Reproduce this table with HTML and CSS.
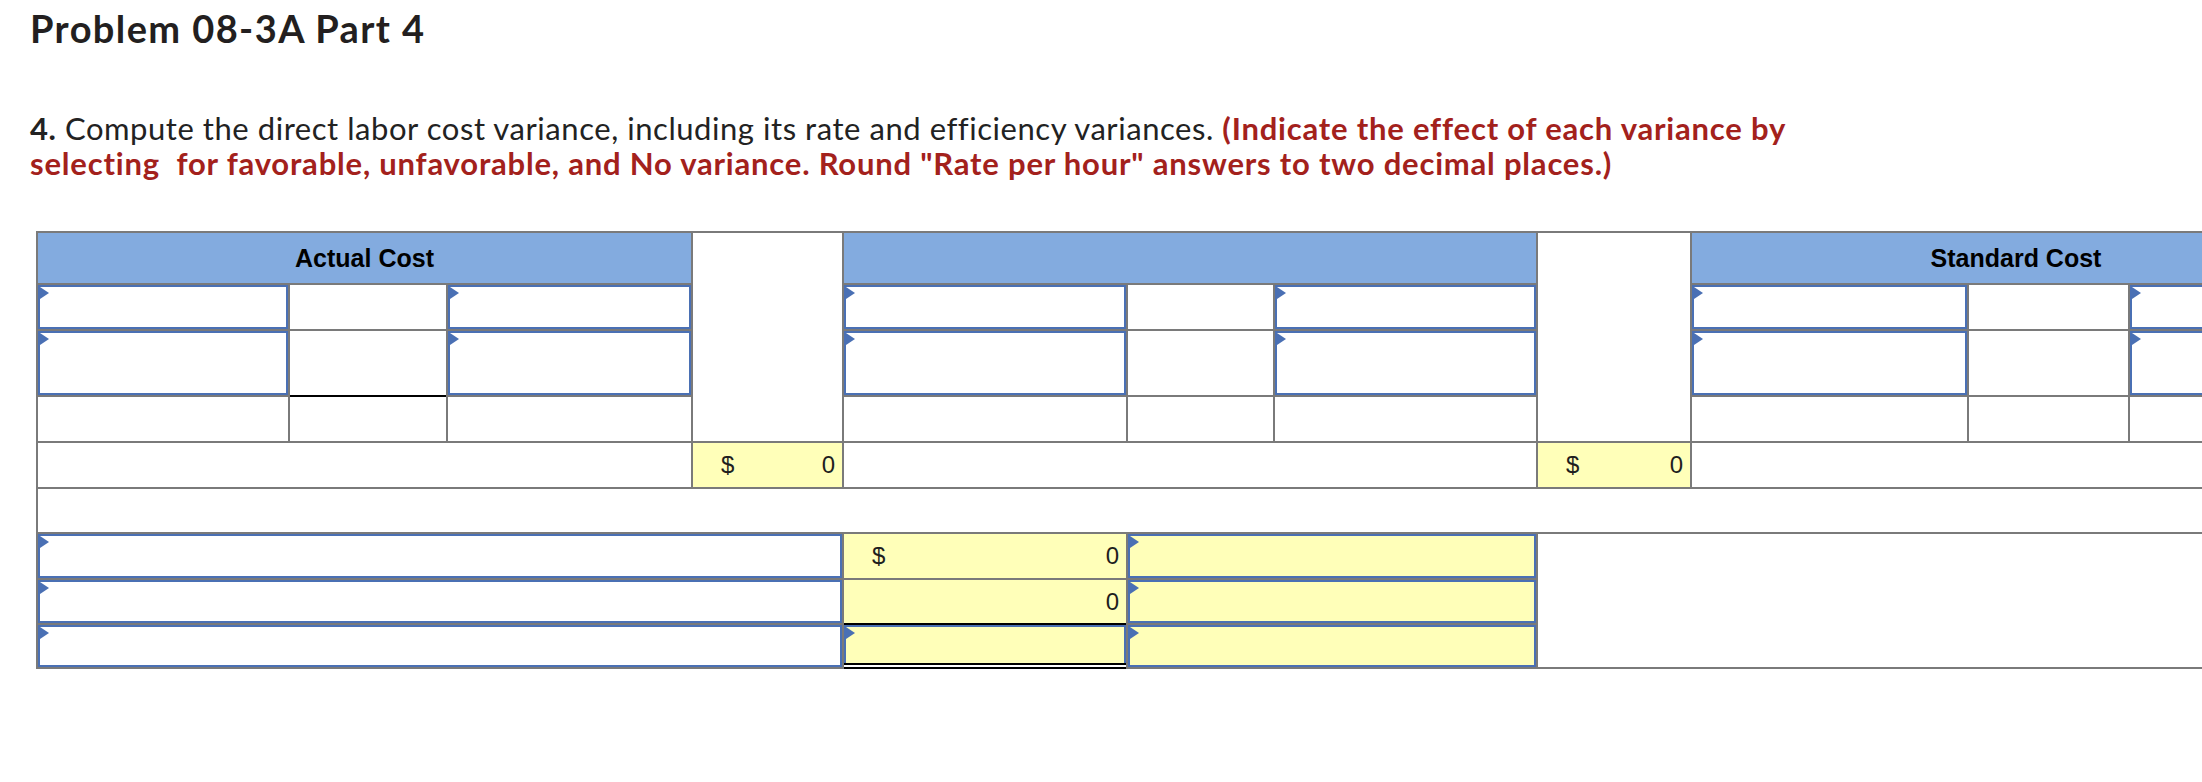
FILE: index.html
```html
<!DOCTYPE html>
<html lang="en">
<head>
<meta charset="utf-8">
<title>Problem 08-3A Part 4</title>
<link rel="stylesheet" href="styles.css">
</head>
<body>
<div class="page">
  <h1 class="title">Problem 08-3A Part 4</h1>
  <p class="prompt"><b class="num">4.</b> Compute the direct labor cost variance, including its rate and efficiency variances. <strong class="note">(Indicate the effect of each variance by selecting&nbsp; for favorable, unfavorable, and No variance. Round "Rate per hour" answers to two decimal places.)</strong></p>

  <div class="sheet-wrap">
    <div class="sheet">
      <!-- header row -->
      <div class="cell hdr span3">Actual Cost</div>
      <div class="cell plain rows4"></div>
      <div class="cell hdr span3"></div>
      <div class="cell plain rows4"></div>
      <div class="cell hdr span3">Standard Cost</div>

      <!-- row 1 -->
      <div class="cell inp"></div>
      <div class="cell plain"></div>
      <div class="cell inp"></div>
      <div class="cell inp"></div>
      <div class="cell plain"></div>
      <div class="cell inp"></div>
      <div class="cell inp"></div>
      <div class="cell plain"></div>
      <div class="cell inp"></div>

      <!-- row 2 -->
      <div class="cell inp"></div>
      <div class="cell plain"></div>
      <div class="cell inp"></div>
      <div class="cell inp"></div>
      <div class="cell plain"></div>
      <div class="cell inp"></div>
      <div class="cell inp"></div>
      <div class="cell plain"></div>
      <div class="cell inp"></div>

      <!-- row 3 -->
      <div class="cell plain"></div>
      <div class="cell plain total-top"></div>
      <div class="cell plain"></div>
      <div class="cell plain"></div>
      <div class="cell plain"></div>
      <div class="cell plain"></div>
      <div class="cell plain"></div>
      <div class="cell plain"></div>
      <div class="cell plain"></div>

      <!-- row 4 -->
      <div class="cell plain span3"></div>
      <div class="cell money"><span>$</span><span>0</span></div>
      <div class="cell plain span3"></div>
      <div class="cell money"><span>$</span><span>0</span></div>
      <div class="cell plain span3"></div>

      <!-- row 5 -->
      <div class="cell plain full"></div>

      <!-- row 6 -->
      <div class="cell inp span4"></div>
      <div class="cell money"><span>$</span><span>0</span></div>
      <div class="cell inp yellow span2"></div>
      <div class="cell plain span4 rows3"></div>

      <!-- row 7 -->
      <div class="cell inp span4"></div>
      <div class="cell money right"><span>0</span></div>
      <div class="cell inp yellow span2"></div>

      <!-- row 8 -->
      <div class="cell inp span4"></div>
      <div class="cell inp yellow grand"></div>
      <div class="cell inp yellow span2"></div>
    </div>
  </div>
</div>
</body>
</html>
```
FILE: styles.css
```css
html, body {
  margin: 0;
  padding: 0;
  background: #ffffff;
  overflow: hidden;
}

.page {
  width: 2202px;
  height: 782px;
  overflow: hidden;
  padding: 10px 0 0 30px;
  box-sizing: border-box;
  font-family: Lato, "Open Sans", sans-serif;
  color: #222222;
}

.title {
  margin: 0;
  font-size: 38px;
  line-height: 36px;
  letter-spacing: 1.4px;
  font-weight: 700;
  color: #231f20;
}

.prompt {
  margin: 65px 0 0 0;
  width: 1800px;
  font-size: 31px;
  line-height: 35px;
  letter-spacing: 0.55px;
  font-weight: 400;
}

.num {
  font-weight: 700;
}

.note {
  color: #a3211c;
  font-weight: 700;
  letter-spacing: 0.8px;
}

.sheet-wrap {
  margin: 50px 0 0 6px;
  width: 2400px;
}

.sheet {
  display: inline-grid;
  grid-template-columns: 250px 156px 243px 149px 282px 145px 261px 152px 275px 159px 210px;
  grid-template-rows: 50px 44px 64px 44px 44px 43px 44px 43px 42px;
  gap: 2px;
  background: #7a7a7a;
  border: 2px solid #7a7a7a;
  font-family: "Liberation Sans", Arial, sans-serif;
}

.cell {
  background: #ffffff;
  box-sizing: border-box;
  position: relative;
}

.span2 { grid-column: span 2; }
.span3 { grid-column: span 3; }
.span4 { grid-column: span 4; }
.full { grid-column: 1 / -1; }
.rows4 { grid-row: span 4; }
.rows3 { grid-row: span 3; }

.hdr {
  background: #83abdf;
  color: #000000;
  font-weight: 700;
  font-size: 25px;
  display: flex;
  align-items: center;
  justify-content: center;
}

.inp {
  border: 2px solid #4a70b4;
}

.inp::before {
  content: "";
  position: absolute;
  left: 0;
  top: 0;
  width: 0;
  height: 0;
  border-left: 9px solid #4a70b4;
  border-top: 6px solid transparent;
  border-bottom: 6px solid transparent;
}

.yellow {
  background: #ffffb9;
}

.money {
  background: #ffffb9;
  display: flex;
  align-items: center;
  justify-content: space-between;
  padding: 0 7px 0 28px;
  font-size: 24px;
  color: #1e1e1e;
}

.money.right {
  justify-content: flex-end;
}

.total-top {
  box-shadow: 0 -2px 0 #000000;
}

.grand {
  box-shadow: 0 -2px 0 #000000;
}

.grand::after {
  content: "";
  position: absolute;
  left: -2px;
  right: -2px;
  bottom: -4px;
  height: 2px;
  border-top: 2px solid #000000;
  border-bottom: 2px solid #000000;
  background: #ffffff;
}
```
